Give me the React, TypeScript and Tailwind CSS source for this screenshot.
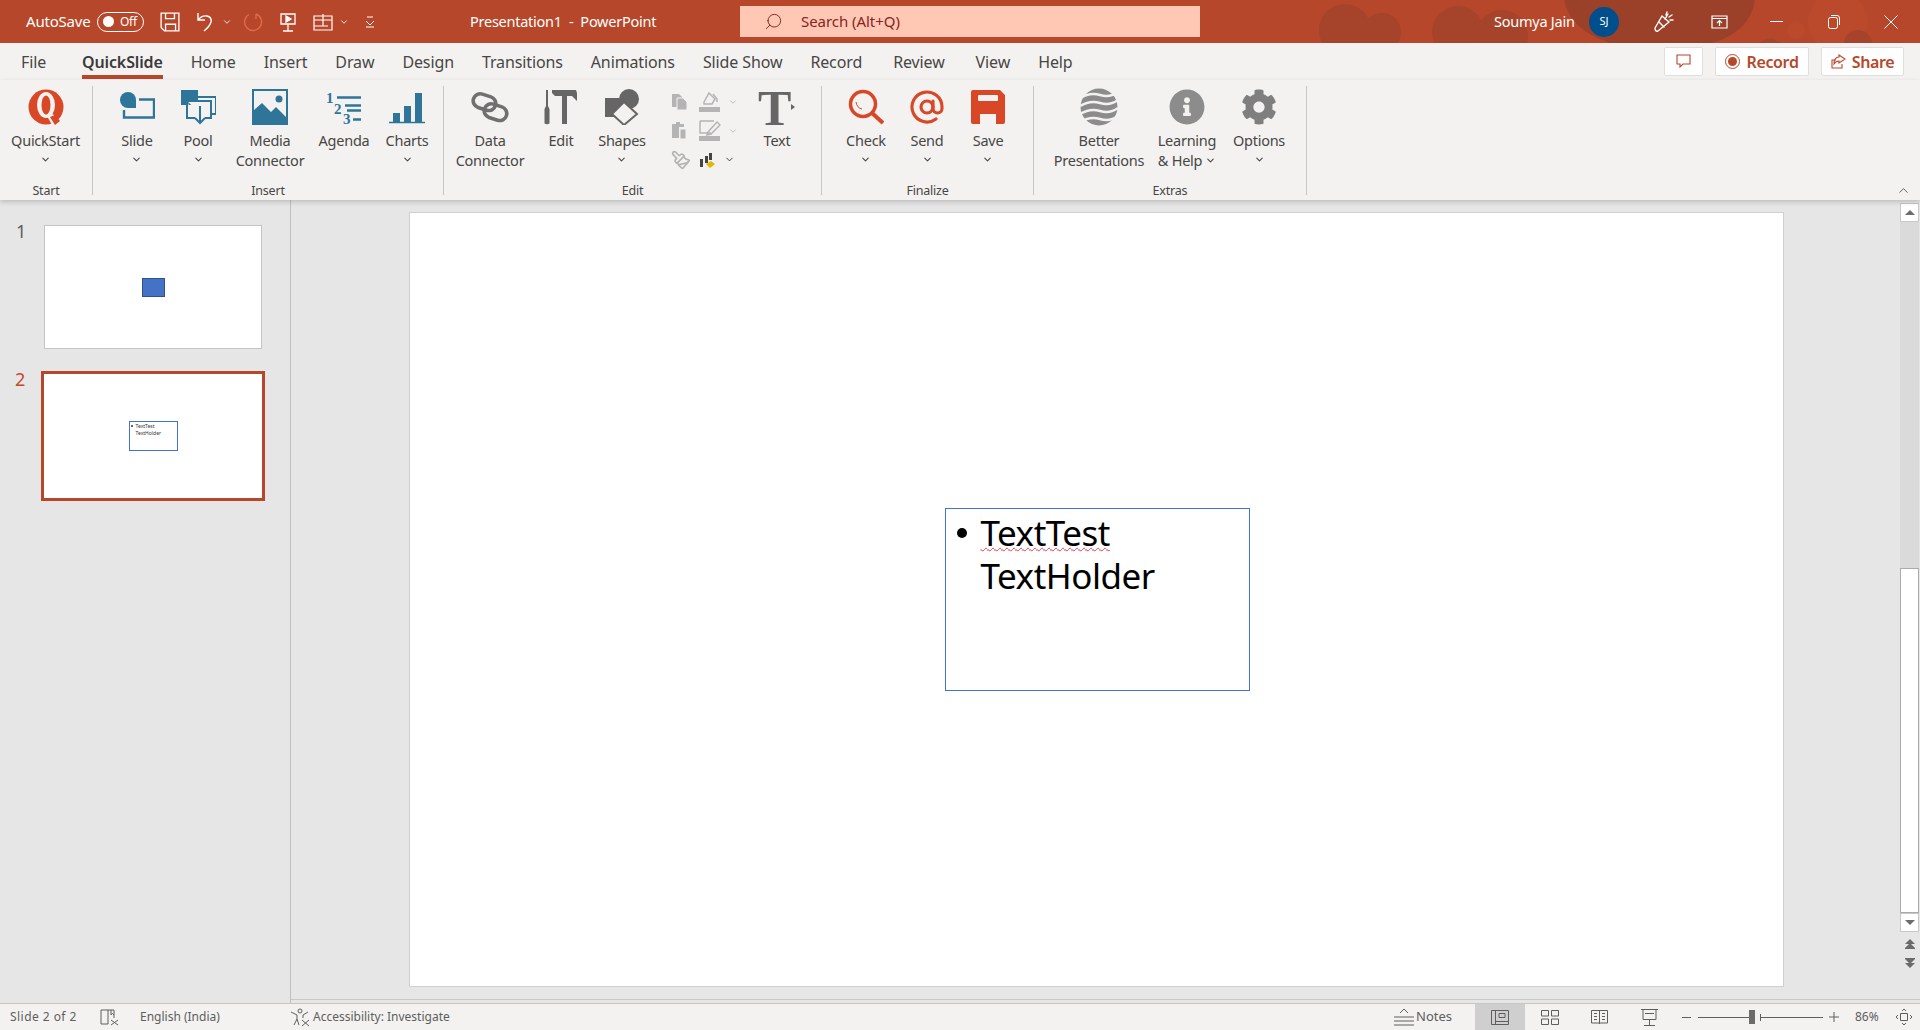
import type { ReactNode } from "react";
import { ChevronDown, ChevronUp, Search, Paintbrush } from "lucide-react";
import { FaCog, FaInfoCircle } from "react-icons/fa";

const TABS = [
  { label: "File" },
  { label: "QuickSlide", cls: "ml-[8px] font-semibold text-[#3b3a39] tracking-[-0.15px]", active: true },
  { label: "Home" },
  { label: "Insert" },
  { label: "Draw" },
  { label: "Design" },
  { label: "Transitions" },
  { label: "Animations" },
  { label: "Slide Show" },
  { label: "Record" },
  { label: "Review", cls: "ml-[3px]" },
  { label: "View", cls: "ml-[3px]" },
  { label: "Help" },
];

const teal = "#2e7599";
const red = "#d84726";
const gray = "#666666";

function Icon({ children, w = 36, h = 36 }: { children: ReactNode; w?: number; h?: number }) {
  return (
    <svg width={w} height={h} viewBox={`0 0 ${w} ${h}`} fill="none">
      {children}
    </svg>
  );
}

/* ------------------------------ ribbon icons ------------------------------ */

const QuickStartIcon = (
  <Icon>
    <circle cx="18" cy="18" r="17.5" fill={red} />
    <ellipse cx="18" cy="16" rx="9" ry="13" fill="#f3f2f1" />
    <ellipse cx="18" cy="16" rx="4.5" ry="9.5" fill={red} />
    <path d="M19 27 L24 36 L30 33 L25 25 Z" fill="#f3f2f1" />
    <path d="M22 28 L27 36 L32 32 L27 26 Z" fill={red} />
  </Icon>
);

const SlideIcon = (
  <Icon>
    <path d="M9 3a8 8 0 1 0 0 16h8V11a8 8 0 0 0-8-8Z" fill={teal} />
    <path d="M20 10.5H35V28.5H5V21" stroke={teal} strokeWidth="2.4" />
  </Icon>
);

const PoolIcon = (
  <Icon>
    <rect x="1" y="1" width="17" height="15" fill={teal} />
    <path d="M8 16V8H36V25H31" stroke={teal} strokeWidth="2" />
    <path d="M7 12H31V29H25M15 29H7V12" stroke={teal} strokeWidth="2" fill="#f3f2f1" />
    <path d="M20 17V34M15 29L20 34L25 29" stroke={teal} strokeWidth="2" />
  </Icon>
);

const MediaIcon = (
  <Icon>
    <rect x="1" y="1" width="34" height="34" stroke={teal} strokeWidth="2" />
    <circle cx="27" cy="10" r="3.5" fill={teal} />
    <path d="M1 22L10 14L19 23L24 18L35 29V35H1Z" fill={teal} />
  </Icon>
);

const AgendaIcon = (
  <Icon h={40}>
    <text x="0" y="16" fontFamily="Liberation Serif" fontWeight="700" fontSize="15" fill={teal}>1</text>
    <text x="8" y="27" fontFamily="Liberation Serif" fontWeight="700" fontSize="15" fill={teal}>2</text>
    <text x="17" y="37" fontFamily="Liberation Serif" fontWeight="700" fontSize="15" fill={teal}>3</text>
    <path d="M11 10.5H35M19 18.5H35M21 23.5H35M27 32.5H35" stroke={teal} strokeWidth="2.4" />
  </Icon>
);

const ChartsIcon = (
  <Icon w={38}>
    <path d="M5 24H12V33H5ZM16 17H23V33H16ZM27 4H34V33H27Z" fill={teal} />
    <path d="M1 33.5H37" stroke={teal} strokeWidth="1.5" />
  </Icon>
);

const ChainIcon = (
  <Icon w={38}>
    <rect x="2" y="6" width="23" height="14" rx="7" transform="rotate(18 13 13)" stroke="#707070" strokeWidth="3.6" />
    <rect x="13" y="16" width="23" height="14" rx="7" transform="rotate(18 24 23)" stroke="#707070" strokeWidth="3.6" />
  </Icon>
);

const EditIcon = (
  <Icon>
    <path d="M3 1H5V17L6.5 20V34.5Q4 36 1.5 34.5V20L3 17Z" fill={gray} />
    <path d="M9 1H33L34 4L34 12L29 7H24V35H19V7H12L9 4Z" fill={gray} />
  </Icon>
);

const ShapesIcon = (
  <Icon>
    <circle cx="25" cy="10" r="10" fill={gray} />
    <rect x="1" y="9" width="17" height="19" fill={gray} />
    <path d="M20 13L33 25L20 36L8 25Z" fill="#f3f2f1" stroke={gray} strokeWidth="2" />
  </Icon>
);

const TextIcon = (
  <Icon w={38} h={60}>
    <text x="0" y="48" fontFamily="Liberation Serif" fontWeight="700" fontSize="50" fill={gray}>T</text>
    <path d="M33 27L37 30L33 33Z" fill={gray} />
  </Icon>
);

const CheckIcon = (
  <Icon>
    <circle cx="15" cy="15" r="12.5" stroke={red} strokeWidth="3.5" />
    <path d="M24 24L35 34" stroke={red} strokeWidth="4" />
    <path d="M8 13Q9 19 14 20" stroke={red} strokeWidth="1" />
  </Icon>
);

const SendIcon = (
  <Icon>
    <g transform="scale(1.5)" stroke={red} strokeWidth="2.1" strokeLinecap="round" strokeLinejoin="round">
      <circle cx="12" cy="12" r="4" />
      <path d="M16 8v5a3 3 0 0 0 6 0v-1a10 10 0 1 0-4 8" />
    </g>
  </Icon>
);

const SaveIcon = (
  <Icon>
    <path d="M3 1H30L35 6V33Q35 35 33 35H26V25H10V35H3Q1 35 1 33V3Q1 1 3 1Z" fill={red} />
    <rect x="8" y="6" width="20" height="6" rx="1" fill="#f3f2f1" />
  </Icon>
);

const GlobeIcon = (
  <Icon w={38} h={38}>
    <circle cx="19" cy="19" r="18.5" fill="#8c8c8c" />
    <path
      d="M0 10Q10 4 20 7T38 4M0 18Q10 12 20 15T38 12M0 26Q10 20 20 23T38 20M0 34Q10 28 20 31T38 28"
      stroke="#f3f2f1"
      strokeWidth="2.6"
    />
  </Icon>
);

/* ------------------------------ small pieces ------------------------------ */

function RibbonButton({
  className,
  icon,
  lines,
  chevron,
  inlineChevron,
}: {
  className: string;
  icon: ReactNode;
  lines: string[];
  chevron?: boolean;
  inlineChevron?: boolean;
}) {
  return (
    <div className={`flex flex-col items-center ${className}`}>
      <div className="flex h-[36px] items-center justify-center">{icon}</div>
      <div className="mt-[5px] flex flex-col items-center text-center text-[14.5px] leading-[20px] tracking-[-0.25px] text-[#484644] whitespace-nowrap">
        {lines.map((l, i) => (
          <div key={l} className="flex items-center gap-[3px]">
            {l}
            {inlineChevron && i === lines.length - 1 && <ChevronDown size={11} strokeWidth={2.3} />}
          </div>
        ))}
        {chevron && <ChevronDown size={11} strokeWidth={2.3} className="mt-[4px]" />}
      </div>
    </div>
  );
}

function Group({ className, label, children }: { className: string; label: string; children: ReactNode }) {
  return (
    <div className={`flex flex-col ${className}`}>
      <div className="flex h-[101px] pt-[9px]">{children}</div>
      <div className="mt-[1px] h-[18px] text-center text-[12.5px] leading-[18px] tracking-[-0.2px] text-[#484644]">
        {label}
      </div>
    </div>
  );
}

const Sep = () => <div className="mt-[6px] h-[109px] w-px bg-[#c8c6c4]" />;

function ToolbarCluster() {
  const light = "#b4b4b4";
  return (
    <div className="-mt-[2px] ml-[17px] flex w-[76px] flex-col">
      <div className="flex h-[29px] items-center">
        <svg width="18" height="18" viewBox="0 0 18 18" fill={light}>
          <path d="M1 1H8L11 4V14H1Z" />
          <path d="M6 5H12L16 9V17H6Z" stroke="#f3f2f1" />
        </svg>
        <svg className="ml-[10px]" width="22" height="22" viewBox="0 0 22 22" fill="none">
          <path d="M5 11L10 2L16 8L13 13H5Z" stroke={light} strokeWidth="1.5" />
          <path d="M14 3L18 8V11" stroke={light} strokeWidth="1.5" />
          <rect x="0" y="16" width="21" height="5" fill={light} />
        </svg>
        <ChevronDown size={10} color={light} className="ml-[7px]" />
      </div>
      <div className="flex h-[29px] items-center">
        <svg width="18" height="20" viewBox="0 0 18 20" fill={light}>
          <path d="M1 3H5V1H9V3H13V6H8V17H1Z" />
          <path d="M9 8H15V18H9Z" stroke="#f3f2f1" />
        </svg>
        <svg className="ml-[10px]" width="22" height="22" viewBox="0 0 22 22" fill="none">
          <path d="M1 1H15M1 1V13H12" stroke={light} strokeWidth="1.5" />
          <path d="M9 12L18 2L21 5L12 14L8 15Z" stroke={light} strokeWidth="1.5" />
          <rect x="0" y="16" width="21" height="5" fill={light} />
        </svg>
        <ChevronDown size={10} color={light} className="ml-[7px]" />
      </div>
      <div className="flex h-[29px] items-center">
        <Paintbrush size={20} color={light} className="-scale-x-100" />
        <svg className="ml-[8px]" width="18" height="18" viewBox="0 0 18 18">
          <path d="M1 8H4V16H1ZM6 5H9V12H6ZM10 2H13V9H10Z" fill="#444" />
          <path d="M7 13L12 10L16 13L11 17Z" fill="#e0b800" />
        </svg>
        <ChevronDown size={11} color="#333" className="ml-[7px]" />
      </div>
    </div>
  );
}

function Ribbon() {
  return (
    <div className="relative z-10 flex h-[120px] bg-[#f3f2f1] shadow-[0_2px_5px_rgba(0,0,0,0.18)]">
      <Group className="w-[92px]" label="Start">
        <RibbonButton className="w-[91px]" icon={QuickStartIcon} lines={["QuickStart"]} chevron />
      </Group>
      <Sep />
      <Group className="w-[350px]" label="Insert">
        <div className="w-[13px]" />
        <RibbonButton className="w-[62px]" icon={SlideIcon} lines={["Slide"]} chevron />
        <RibbonButton className="w-[60px]" icon={PoolIcon} lines={["Pool"]} chevron />
        <RibbonButton className="w-[84px]" icon={MediaIcon} lines={["Media", "Connector"]} />
        <RibbonButton className="w-[64px]" icon={AgendaIcon} lines={["Agenda"]} />
        <RibbonButton className="w-[62px]" icon={ChartsIcon} lines={["Charts"]} chevron />
      </Group>
      <Sep />
      <Group className="w-[377px]" label="Edit">
        <div className="w-[4px]" />
        <RibbonButton className="w-[84px]" icon={ChainIcon} lines={["Data", "Connector"]} />
        <RibbonButton className="w-[58px]" icon={EditIcon} lines={["Edit"]} />
        <RibbonButton className="w-[64px]" icon={ShapesIcon} lines={["Shapes"]} chevron />
        <ToolbarCluster />
        <RibbonButton className="w-[60px]" icon={TextIcon} lines={["Text"]} />
      </Group>
      <Sep />
      <Group className="w-[211px]" label="Finalize">
        <div className="w-[13px]" />
        <RibbonButton className="w-[62px]" icon={CheckIcon} lines={["Check"]} chevron />
        <RibbonButton className="w-[60px]" icon={SendIcon} lines={["Send"]} chevron />
        <RibbonButton className="w-[62px]" icon={SaveIcon} lines={["Save"]} chevron />
      </Group>
      <Sep />
      <Group className="w-[272px]" label="Extras">
        <div className="w-[10px]" />
        <RibbonButton className="w-[110px]" icon={GlobeIcon} lines={["Better", "Presentations"]} />
        <RibbonButton
          className="w-[66px]"
          icon={<FaInfoCircle size={36} color="#8c8c8c" />}
          lines={["Learning", "& Help"]}
          inlineChevron
        />
        <RibbonButton className="w-[78px]" icon={<FaCog size={36} color="#7f7f7f" />} lines={["Options"]} chevron />
      </Group>
      <Sep />
      <div className="flex-1" />
      <div className="flex w-[33px] items-end justify-center pb-[2px]">
        <ChevronUp size={15} strokeWidth={1.2} color="#333" />
      </div>
    </div>
  );
}

function TitleBar() {
  return (
    <div className="relative flex h-[43px] items-center overflow-hidden bg-[#b7472a] text-white [&>*]:shrink-0">
      {/* decorative pattern behind the caption buttons */}
      <svg className="absolute right-0 top-0" width="640" height="43" viewBox="0 0 640 43" fill="#a5442a">
        <circle cx="65" cy="30" r="26" />
        <circle cx="102" cy="32" r="19" />
        <circle cx="178" cy="32" r="26" />
        <circle cx="222" cy="36" r="26" />
        <path d="M284 0H475Q470 32 432 43H330Q290 30 284 0Z" fill="#9b412a" />
        <path d="M480 43Q490 34 500 43Z" />
        <circle cx="558" cy="22" r="30" fill="#bb492c" />
        <circle cx="516" cy="30" r="9" fill="#bb492c" />
        <circle cx="578" cy="44" r="14" />
      </svg>

      <span className="relative ml-[26px] w-[71px] text-[15px] tracking-[-0.2px]">AutoSave</span>
      <div className="relative flex h-[20px] w-[47px] items-center rounded-full border border-white pl-[5px]">
        <span className="h-[11px] w-[11px] rounded-full bg-white" />
        <span className="ml-[6px] text-[12px] tracking-[-0.3px]">Off</span>
      </div>
      <svg className="relative ml-[16px]" width="20" height="20" viewBox="0 0 18 18" fill="none" stroke="white" strokeWidth="1.2">
        <path d="M1 1H17V17H4L1 14Z" />
        <path d="M5 1V6H13V1M5 17V11H14V17" />
      </svg>
      <svg className="relative ml-[16px]" width="18" height="20" viewBox="0 0 18 20" fill="none" stroke="white" strokeWidth="1.4">
        <path d="M2 1V8H9M2 8Q6 3 11 4T15 10Q14 14 8 19" />
      </svg>
      <ChevronDown className="relative ml-[8px]" size={10} strokeWidth={2} />
      <svg className="relative ml-[11px]" width="20" height="20" viewBox="0 0 20 20" fill="none" stroke="#e0694c" strokeWidth="1.4">
        <path d="M13 2A8.5 8.5 0 1 1 6 2.5M13 2V7" />
      </svg>
      <svg className="relative ml-[16px]" width="18" height="20" viewBox="0 0 18 20" fill="none" stroke="white" strokeWidth="1.3">
        <path d="M2 2H16V12H2ZM9 12V19M4 19H14" />
        <path d="M7 4L12 7L7 10Z" fill="white" />
      </svg>
      <svg className="relative ml-[16px]" width="20" height="18" viewBox="0 0 20 18" fill="none" stroke="white" strokeWidth="1.2">
        <path d="M1 3H19V17H1ZM1 7H19M10 1V13M1 13H15" />
      </svg>
      <ChevronDown className="relative ml-[6px]" size={10} strokeWidth={2} />
      <svg className="relative ml-[15px]" width="12" height="12" viewBox="0 0 12 12" fill="none" stroke="white" strokeWidth="1">
        <path d="M3 1H9M2 5L6 9L10 5M2 11H10" />
      </svg>

      <span className="relative ml-[94px] w-[270px] whitespace-pre text-[14.5px] tracking-[-0.25px]">Presentation1  -  PowerPoint</span>
      <div className="relative flex h-[31px] w-[460px] items-center bg-[#ffc8b4] pl-[24px] text-[#8a2222]">
        <Search size={19} strokeWidth={1.2} className="-scale-x-100" />
        <span className="ml-[18px] text-[15px] tracking-[-0.05px]">Search (Alt+Q)</span>
      </div>

      <span className="relative ml-[294px] w-[95px] text-[14.5px] tracking-[-0.25px]">Soumya Jain</span>
      <div className="relative flex h-[30px] w-[30px] items-center justify-center rounded-full bg-[#004e8c] text-[11px]">SJ</div>
      <svg className="relative ml-[34px]" width="21" height="22" viewBox="0 0 21 22" fill="none" stroke="white" strokeWidth="1.4" strokeLinecap="round">
        <path d="M2 17L9 5L16 11L5 20Q2 21 2 17Z" />
        <path d="M6 11L11 16" />
        <path d="M13 4L14 1M16 6L19 4M17 9L20 9M12 8L15 3" />
      </svg>
      <svg className="relative ml-[37px]" width="17" height="14" viewBox="0 0 17 14" fill="none" stroke="white" strokeWidth="1.2">
        <path d="M1 1H16V13H1ZM1 3.5H16" />
        <path d="M8.5 11V6M6 8L8.5 5.5L11 8" />
      </svg>
      <div className="relative ml-[42px] h-px w-[13px] bg-white" />
      <svg className="relative ml-[45px]" width="12" height="14" viewBox="0 0 12 14" fill="none" stroke="white" strokeWidth="1">
        <rect x="0.5" y="2.5" width="9" height="11" rx="2" />
        <path d="M3 .5H9Q11.5 .5 11.5 3V10" />
      </svg>
      <svg className="relative ml-[44px]" width="14" height="14" viewBox="0 0 14 14" stroke="white" strokeWidth="1">
        <path d="M0.5 0.5L13.5 13.5M13.5 0.5L0.5 13.5" />
      </svg>
    </div>
  );
}

function TabRow() {
  return (
    <div className="flex h-[37px] items-start gap-[28px] bg-[#f3f2f1] pl-[21px] pt-[8px] text-[16px] leading-[22px] tracking-[-0.12px] text-[#484644]">
      {TABS.map((t) => (
        <span
          key={t.label}
          className={`${t.cls ?? ""} ${t.active ? "h-[28px] border-b-[4px] border-[#b7472a]" : ""}`}
        >
          {t.label}
        </span>
      ))}
      <div className="-mt-[4px] ml-auto flex gap-[12px] pr-[16px] tracking-[-0.35px] text-[#b7472a]">
        <div className="flex h-[29px] w-[39px] items-center justify-center rounded-[2px] border border-[#e1dfdd] bg-white">
          <svg width="15" height="15" viewBox="0 0 15 15" fill="none" stroke="#b7472a" strokeWidth="1.1">
            <path d="M1 1H14V10H7L4 13V10H1Z" />
          </svg>
        </div>
        <div className="flex h-[29px] w-[94px] items-center justify-center gap-[6px] rounded-[2px] border border-[#e1dfdd] bg-white font-semibold">
          <span className="flex h-[15px] w-[15px] items-center justify-center rounded-full border border-[#b7472a]">
            <span className="h-[9px] w-[9px] rounded-full bg-[#b7472a]" />
          </span>
          Record
        </div>
        <div className="flex h-[29px] w-[83px] items-center justify-center gap-[6px] rounded-[2px] border border-[#e1dfdd] bg-white font-semibold">
          <svg width="15" height="15" viewBox="0 0 15 15" fill="none" stroke="#b7472a" strokeWidth="1.1">
            <path d="M5 6H1V14H11V10M8 1L14 5L8 9V7Q5 7 3 10Q3 3 8 3Z" />
          </svg>
          Share
        </div>
      </div>
    </div>
  );
}

function Thumbnails() {
  return (
    <div className="w-[291px] shrink-0 border-r border-[#c0c0c0] pt-[25px]">
      <div className="flex pl-[16px]">
        <span className="w-[28px] text-[18px] leading-[12px] text-[#605e5c]">1</span>
        <div className="flex h-[124px] w-[218px] items-center justify-center border border-[#c4c4c4] bg-white">
          <div className="h-[19px] w-[23px] border border-[#2f528f] bg-[#4472c4]" />
        </div>
      </div>
      <div className="mt-[22px] flex pl-[15px]">
        <span className="w-[26px] pt-[2px] text-[18px] leading-[12px] text-[#c8472a]">2</span>
        <div className="flex h-[130px] w-[224px] items-center justify-center border-[3px] border-[#b7472a] bg-white">
          <div className="flex h-[30px] w-[49px] border border-[#4472c4] pl-[1px] pt-[1px] text-[5px] leading-[7px] text-[#333]">
            <span className="mt-[2px] h-[2px] w-[2px] rounded-full bg-[#333]" />
            <div className="ml-[3px]">
              TextTest
              <br />
              TextHolder
            </div>
          </div>
        </div>
      </div>
    </div>
  );
}

function Arrow({ down, className = "" }: { down?: boolean; className?: string }) {
  return (
    <svg width="10" height="5" viewBox="0 0 10 5" fill="#6b6b6b" className={className}>
      <path d={down ? "M0 0H10L5 5Z" : "M5 0L10 5H0Z"} />
    </svg>
  );
}

function Scrollbar() {
  return (
    <div className="flex w-[19px] flex-col items-stretch pt-[3px]">
      <div className="flex h-[19px] items-center justify-center border border-[#c8c8c8] bg-white">
        <Arrow />
      </div>
      <div className="h-[346px] bg-[#dadada]" />
      <div className="h-[345px] border border-[#ababab] bg-white" />
      <div className="flex h-[19px] items-center justify-center border border-[#c8c8c8] bg-white">
        <Arrow down />
      </div>
      <div className="mt-[7px] flex flex-col items-center">
        <Arrow />
        <Arrow className="-mt-[1px]" />
        <div className="h-[1px] w-[10px] bg-[#6b6b6b]" />
      </div>
      <div className="mt-[9px] flex flex-col items-center">
        <div className="h-[1px] w-[10px] bg-[#6b6b6b]" />
        <Arrow down />
        <Arrow down className="-mt-[1px]" />
      </div>
    </div>
  );
}

function Stage() {
  return (
    <div className="flex h-[800px] flex-1 border-b border-[#c8c8c8]">
      <div className="ml-[118px] mt-[12px] flex h-[775px] w-[1375px] items-center justify-center border border-[#d0d0d0] bg-white">
        <div className="ml-[1px] h-[183px] w-[305px] border border-[#4472c4] pl-[11px] pt-[2px] text-[35px] leading-[43px] tracking-[-0.48px] text-black">
          <div className="flex">
            <span className="mt-[17px] h-[10px] w-[10px] shrink-0 rounded-full bg-black" />
            <div className="ml-[14px]">
              <span className="underline decoration-[#e8384f] decoration-wavy decoration-1 underline-offset-[1px]">TextTest</span>
              <br />
              TextHolder
            </div>
          </div>
        </div>
      </div>
      <div className="w-[116px]" />
      <Scrollbar />
      <div className="w-px" />
    </div>
  );
}

function StatusBar() {
  return (
    <div className="flex h-[27px] items-center border-t border-[#c8c6c4] bg-[#f3f2f1] text-[12px] text-[#605e5c] [&>*]:shrink-0">
      <span className="ml-[10px] w-[90px] tracking-[0.45px]">Slide 2 of 2</span>
      <svg width="19" height="17" viewBox="0 0 19 17" fill="none" stroke="#605e5c">
        <path d="M8 15H1V1H14V9M8 1V15M11 1V6L12.5 4.5L14 6" />
        <path d="M11 11L18 16M18 11L11 16" />
      </svg>
      <span className="ml-[21px] w-[150px]">English (India)</span>
      <svg width="21" height="19" viewBox="0 0 21 19" fill="none" stroke="#605e5c">
        <circle cx="10" cy="3" r="2" />
        <path d="M1 4L7 7V11L4 17M18 4L13 7V10M7 11L9 17" />
        <path d="M12 12L19 18M19 12L12 18" />
      </svg>
      <span className="ml-[2px] w-[1081px]">Accessibility: Investigate</span>
      <svg width="20" height="19" viewBox="0 0 20 19" fill="none" stroke="#605e5c">
        <path d="M0 9H20M0 13H20M0 17H20M6 5L10 1L14 5" />
      </svg>
      <span className="ml-[2px] w-[59px] text-[13px]">Notes</span>
      <div className="flex h-full w-[50px] items-center justify-center bg-[#cfcfcf]">
        <svg width="18" height="15" viewBox="0 0 18 15" fill="none" stroke="#605e5c">
          <path d="M.5 .5H17.5V14.5H.5ZM4.5 .5V14.5M4.5 11.5H17.5M8 3.5H14V7.5H8Z" />
        </svg>
      </div>
      <svg className="ml-[16px]" width="18" height="15" viewBox="0 0 18 15" fill="none" stroke="#605e5c">
        <path d="M.5 .5H7.5V6H.5ZM10.5 .5H17.5V6H10.5ZM.5 9H7.5V14.5H.5ZM10.5 9H17.5V14.5H10.5Z" />
      </svg>
      <svg className="ml-[32px]" width="17" height="16" viewBox="0 0 17 16" fill="none" stroke="#605e5c">
        <path d="M.5 1.5H16.5V14H.5ZM8.5 1.5V15M3 4.5H6M3 7.5H6M3 10.5H6M11 4.5H14M11 7.5H14M11 10.5H14" />
      </svg>
      <svg className="ml-[33px]" width="17" height="17" viewBox="0 0 17 17" fill="none" stroke="#605e5c">
        <path d="M0 .5H17M2 .5V10.5H15V.5M8.5 10.5V16M3 16.5H14M4 4.5H13" />
      </svg>
      <div className="ml-[24px] h-px w-[9px] bg-[#605e5c]" />
      <div className="ml-[7px] flex w-[125px] items-center">
        <div className="h-px w-[51px] bg-[#605e5c]" />
        <div className="h-[14px] w-[6px] bg-[#6b6b6b]" />
        <div className="ml-[5px] h-[7px] w-px bg-[#605e5c]" />
        <div className="h-px flex-1 bg-[#605e5c]" />
      </div>
      <svg className="ml-[6px]" width="10" height="10" viewBox="0 0 10 10" stroke="#605e5c">
        <path d="M0 5H10M5 0V10" />
      </svg>
      <span className="ml-[16px] w-[40px]">86%</span>
      <svg width="18" height="18" viewBox="0 0 18 18" fill="none" stroke="#605e5c">
        <path d="M5.5 5.5H12.5V12.5H5.5ZM7 3L9 1L11 3M7 15L9 17L11 15M3 7L1 9L3 11M15 7L17 9L15 11" />
      </svg>
    </div>
  );
}

export default function App() {
  return (
    <div className="flex h-[1030px] w-[1920px] flex-col overflow-hidden bg-[#e6e6e6] font-['Noto_Sans',sans-serif]">
      <TitleBar />
      <TabRow />
      <Ribbon />
      <div className="flex h-[803px]">
        <Thumbnails />
        <Stage />
      </div>
      <StatusBar />
    </div>
  );
}
